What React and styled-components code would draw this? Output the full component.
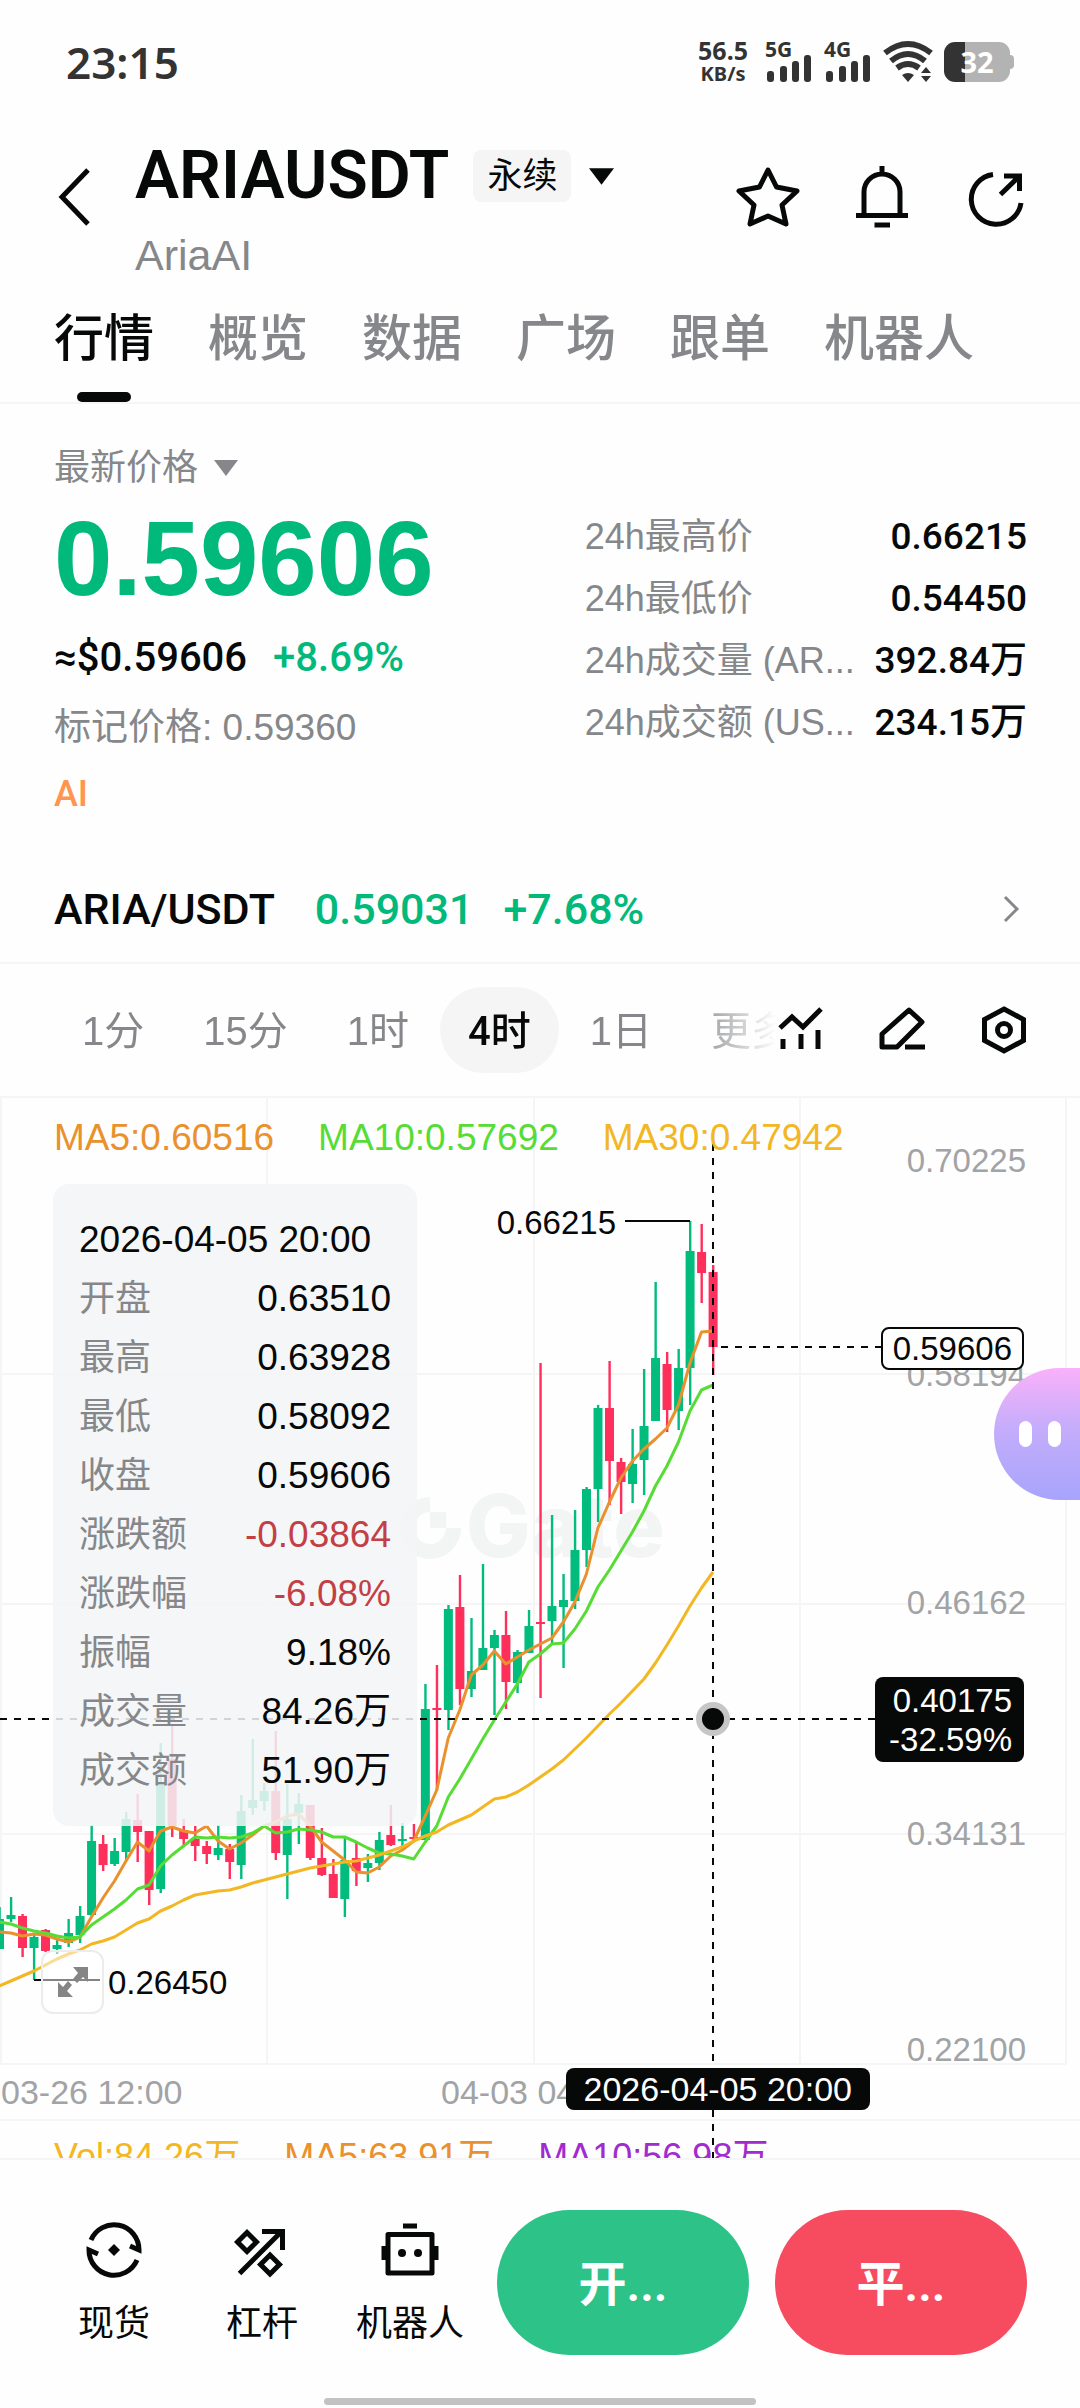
import React from "react";
import styled, { createGlobalStyle } from "styled-components";

const GlobalStyle = createGlobalStyle`
  * {
    box-sizing: border-box;
  }
  body {
    margin: 0;
    background: #fefefe;
    color: #070808;
    font-family: "Liberation Sans", "Noto Sans CJK SC", sans-serif;
  }
  button {
    margin: 0;
    padding: 0;
    border: 0;
    background: none;
    color: inherit;
    font: inherit;
    cursor: pointer;
  }
  a {
    color: inherit;
    text-decoration: none;
  }
  svg {
    display: block;
    flex: none;
  }
`;

const GREEN = "#02b97c";
const RED = "#ff2f5b";
const MEDIUM = `Roboto, "Noto Sans CJK SC", sans-serif`;

const Page = styled.div`
  min-height: 100vh;
  display: flex;
  flex-direction: column;
`;

/* status bar */
const StatusBar = styled.div`
  height: 118px;
  padding: 6px 66px 0;
  display: flex;
  align-items: center;
  justify-content: space-between;
  color: #333;
  font-family: "Noto Sans", sans-serif;
  font-weight: 600;

  .time {
    font-size: 44px;
  }
  .right {
    display: flex;
    align-items: center;
    gap: 11px;
  }
  .speed {
    margin-right: 6px;
    font-size: 25px;
    font-weight: 700;
    line-height: 23px;
    text-align: center;
  }
  .speed span {
    display: block;
    font-size: 20px;
  }
  svg {
    overflow: visible;
  }
`;
const Battery = styled.div`
  position: relative;
  width: 66px;
  height: 40px;
  margin-right: 4px;
  border-radius: 11px;
  background: linear-gradient(90deg, #333 32%, #b3b3b3 32%);
  color: #fff;
  font-size: 29px;
  font-weight: 700;
  line-height: 40px;
  text-align: center;

  &::after {
    content: "";
    position: absolute;
    left: 66px;
    top: 13px;
    width: 4px;
    height: 14px;
    border-radius: 0 4px 4px 0;
    background: #b3b3b3;
  }
`;

/* header */
const Header = styled.header`
  height: 158px;
  padding: 0 52px 0 56px;
  display: flex;
  align-items: center;
`;
const TitleBox = styled.div`
  flex: 1;
  padding: 32px 0 0 40px;

  .row {
    height: 56px;
    margin-bottom: 28px;
    display: flex;
    align-items: center;
  }
  h1 {
    margin: 0;
    font-family: ${MEDIUM};
    font-size: 66px;
    font-weight: 600;
    line-height: 56px;
  }
  .tag {
    height: 52px;
    margin: 0 18px 0 24px;
    padding: 0 14px;
    border-radius: 8px;
    background: #f5f5f5;
    font-size: 35px;
    line-height: 52px;
  }
  .sub {
    color: #85878a;
    font-size: 43px;
    line-height: 46px;
  }
`;
const Actions = styled.div`
  display: flex;
  gap: ${(props) => props.$gap}px;
`;

const Tabs = styled.nav`
  height: 128px;
  padding: 0 54px;
  display: flex;
  gap: 54px;
  border-bottom: 2px solid #f5f5f5;
`;
const Tab = styled.button`
  padding-top: 33px;
  display: flex;
  flex-direction: column;
  align-items: center;
  justify-content: space-between;
  color: ${(props) => (props.$active ? "#070808" : "#85878a")};
  font-size: 50px;
  font-weight: 500;
  line-height: 60px;

  &::after {
    content: "";
    width: 54px;
    height: 10px;
    border-radius: 5px;
    background: ${(props) => (props.$active ? "#070808" : "transparent")};
  }
`;

/* price block */
const Quote = styled.section`
  padding: 42px 53px 0 54px;
  display: grid;
  grid-template-columns: minmax(0, 6fr) minmax(0, 5fr);
`;
const PriceColumn = styled.div`
  display: flex;
  flex-direction: column;
  align-items: flex-start;
  gap: 24px;

  .label {
    display: flex;
    align-items: center;
    gap: 16px;
    color: #85878a;
    font-size: 36px;
    line-height: 44px;
  }
  .price {
    color: ${GREEN};
    font-size: 105px;
    font-weight: bold;
    line-height: 90px;
  }
  .usd {
    display: flex;
    gap: 26px;
    font-family: ${MEDIUM};
    font-size: 40px;
    font-weight: 500;
    line-height: 60px;
  }
  .up {
    color: ${GREEN};
  }
  .mark {
    color: #85878a;
    font-size: 37px;
    line-height: 32px;
  }
  .concept {
    color: #ff954f;
    font-family: ${MEDIUM};
    font-size: 36px;
    font-weight: 500;
    line-height: 52px;
  }
`;
const Stats = styled.dl`
  margin: 69px 0 0;
  display: flex;
  flex-direction: column;
  gap: 18px;
`;
const Stat = styled.div`
  display: flex;
  justify-content: space-between;
  font-size: 36px;
  line-height: 44px;
  white-space: nowrap;

  dt {
    color: #85878a;
  }
  dd {
    margin: 0;
    font-family: ${MEDIUM};
    font-size: 37px;
    font-weight: 500;
  }
`;

const SpotLink = styled.a`
  height: 108px;
  margin-top: 36px;
  padding: 0 60px 0 54px;
  display: flex;
  align-items: center;
  border-bottom: 2px solid #f5f5f5;
  font-family: ${MEDIUM};
  font-size: 43px;
  font-weight: 500;

  .price {
    margin: 0 30px 0 40px;
    color: ${GREEN};
  }
  .change {
    flex: 1;
    color: ${GREEN};
  }
`;

/* interval bar */
const IntervalBar = styled.div`
  height: 134px;
  padding: 0 52px 0 54px;
  display: flex;
  align-items: center;
  border-bottom: 2px solid #f5f5f5;
`;
const Intervals = styled.div`
  flex: 1;
  min-width: 0;
  overflow: hidden;
  display: flex;
  gap: 3px;
  mask-image: linear-gradient(90deg, #000 88%, transparent);
`;
const Interval = styled.button`
  flex: none;
  height: 86px;
  padding: 0 28px 4px;
  border-radius: 43px;
  background: ${(props) => (props.$active ? "#f5f5f5" : "none")};
  color: ${(props) => (props.$active ? "#070808" : "#85878a")};
  font-family: ${(props) => (props.$active ? MEDIUM : "inherit")};
  font-size: 40px;
  font-weight: ${(props) => (props.$active ? 500 : 400)};
`;

/* chart */
const ChartPanel = styled.section`
  position: relative;
  overflow: hidden;

  svg.plot {
    width: 100%;
    height: auto;
  }
`;
const Legend = styled.div`
  position: absolute;
  left: 54px;
  top: ${(props) => (props.$volume ? "auto" : "15px")};
  bottom: ${(props) => (props.$volume ? "0" : "auto")};
  height: ${(props) => (props.$volume ? 26 : 50)}px;
  overflow: hidden;
  display: flex;
  gap: 44px;
  font-size: ${(props) => (props.$volume ? 36 : 37)}px;
  line-height: 50px;
  white-space: nowrap;

  .ma5 {
    color: #e9912d;
  }
  .ma10 {
    color: #57dc35;
  }
  .ma30,
  .vol {
    color: #f2b722;
  }
  .volma10 {
    color: #a22bd0;
  }
`;
const Tooltip = styled.dl`
  position: absolute;
  left: 53px;
  top: 86px;
  width: 364px;
  margin: 0;
  padding: 26px;
  border-radius: 16px;
  background: rgba(242, 244, 246, 0.86);
  line-height: 59px;
  font-size: 37px;
  white-space: nowrap;

  div {
    height: 59px;
    display: flex;
    justify-content: space-between;
  }
  dt {
    color: #85878a;
    font-size: 36px;
  }
  dd {
    margin: 0;
  }
  .down {
    color: #c33f45;
  }
`;
const Tag = styled.div`
  position: absolute;
  right: 56px;
  border-radius: 8px;
  font-size: 33px;
`;
const LastPriceTag = styled(Tag)`
  top: 229px;
  padding: 0 10px;
  border: 2px solid #070808;
  background: #fefefe;
  line-height: 39px;
`;
const CursorTag = styled(Tag)`
  top: 579px;
  padding: 4px 12px 3px 14px;
  background: #070808;
  color: #fff;
  line-height: 39px;
  text-align: right;
`;
const DateTag = styled(Tag)`
  right: 210px;
  top: 970px;
  padding: 0 18px;
  background: #070808;
  color: #fff;
  font-size: 34px;
  line-height: 42px;
`;
const ExpandButton = styled.button`
  position: absolute;
  left: 41px;
  top: 852px;
  width: 63px;
  height: 64px;
  display: flex;
  align-items: center;
  justify-content: center;
  border: 2px solid #ececec;
  border-radius: 12px;
  background: rgba(255, 255, 255, 0.5);
`;
const Assistant = styled.button`
  position: absolute;
  right: 0;
  top: 270px;
  width: 86px;
  height: 132px;
  padding-left: 25px;
  display: flex;
  align-items: center;
  gap: 16px;
  border-radius: 66px 0 0 66px;
  background: linear-gradient(#fab1fa, #c5adfb 45%, #a7a4fc);

  span {
    width: 13px;
    height: 26px;
    border-radius: 7px;
    background: #fff;
  }
`;

/* bottom bar */
const BottomBar = styled.footer`
  flex: 1;
  position: relative;
  min-height: 250px;
  padding: 50px 53px 53px 40px;
  display: flex;
  align-items: flex-start;
  border-top: 2px solid #f5f5f5;

  &::after {
    content: "";
    position: absolute;
    left: 30%;
    right: 30%;
    bottom: 3px;
    height: 7px;
    border-radius: 4px;
    background: #c2c2c2;
  }
`;
const Tool = styled.button`
  width: 148px;
  height: 145px;
  display: flex;
  flex-direction: column;
  align-items: center;
  justify-content: center;
  gap: 22px;
  font-size: 36px;
  line-height: 44px;
`;
const TradeButtons = styled.div`
  flex: 1;
  margin-left: 13px;
  display: flex;
  gap: 26px;
`;
const TradeButton = styled.button`
  flex: 1;
  height: 145px;
  padding-bottom: 6px;
  border-radius: 73px;
  background: ${(props) => (props.$short ? "#f74c60" : "#2dc388")};
  color: #fff;
  font-family: ${MEDIUM};
  font-size: 48px;
  font-weight: 600;
`;

const Icon = ({ size, children }) => (
  <svg
    width={size}
    height={size}
    viewBox={`0 0 ${size} ${size}`}
    fill="none"
    stroke="#070808"
    strokeWidth="5"
    aria-hidden="true"
  >
    {children}
  </svg>
);

const Signal = ({ label }) => (
  <svg width="48" height="42" viewBox="0 0 48 42" fill="#333">
    <text x="0" y="16" fontSize="21" fontWeight="700">
      {label}
    </text>
    <rect x="2" y="30" width="7" height="11" rx="3" />
    <rect x="15" y="25" width="7" height="16" rx="3" />
    <rect x="27" y="20" width="7" height="21" rx="3" />
    <rect x="39" y="14" width="7" height="27" rx="3" />
  </svg>
);

const Triangle = ({ width, height, color }) => (
  <svg width={width} height={height} viewBox="0 0 24 16" fill={color}>
    <path d="M0 0H24L12 16Z" />
  </svg>
);

const tabs = ["行情", "概览", "数据", "广场", "跟单", "机器人"];
const intervals = ["1分", "15分", "1时", "4时", "1日", "更多"];
const stats = [
  ["24h最高价", "0.66215"],
  ["24h最低价", "0.54450"],
  ["24h成交量 (AR...", "392.84万"],
  ["24h成交额 (US...", "234.15万"],
];
const details = [
  ["开盘", "0.63510"],
  ["最高", "0.63928"],
  ["最低", "0.58092"],
  ["收盘", "0.59606"],
  ["涨跌额", "-0.03864", true],
  ["涨跌幅", "-6.08%", true],
  ["振幅", "9.18%"],
  ["成交量", "84.26万"],
  ["成交额", "51.90万"],
];

// body top, body bottom, high, low, 1 = rising
const candles = [
  [821, 851, 809, 851, 1], [817, 821, 799, 824, 1], [818, 850, 816, 859, 0],
  [839, 850, 837, 882, 1], [832, 853, 831, 854, 0], [847, 851, 842, 856, 1],
  [835, 845, 821, 849, 1], [818, 837, 808, 845, 1], [743, 817, 727, 818, 1],
  [746, 767, 737, 773, 0], [753, 766, 740, 768, 1], [721, 754, 714, 762, 1],
  [722, 734, 696, 764, 0], [733, 792, 733, 807, 0], [685, 791, 645, 795, 1],
  [661, 728, 628, 739, 0], [732, 741, 721, 749, 0], [741, 748, 728, 763, 0],
  [748, 756, 743, 766, 0], [750, 757, 727, 762, 1], [751, 764, 746, 781, 0],
  [713, 767, 697, 781, 1], [702, 710, 641, 717, 1], [693, 703, 685, 713, 1],
  [693, 755, 633, 762, 0], [721, 757, 686, 801, 1], [706, 715, 695, 746, 1],
  [707, 760, 707, 762, 0], [760, 777, 730, 778, 0], [776, 800, 761, 800, 0],
  [762, 801, 739, 819, 1], [760, 773, 743, 788, 0], [765, 770, 756, 784, 1],
  [742, 765, 734, 772, 1], [737, 747, 707, 748, 0], [741, 743, 725, 748, 1],
  [739, 741, 726, 744, 0], [611, 742, 586, 742, 1], [610, 612, 567, 693, 0],
  [511, 612, 507, 632, 1], [509, 591, 477, 607, 0], [573, 591, 520, 599, 1],
  [550, 572, 466, 572, 1], [537, 550, 532, 617, 1], [537, 584, 513, 611, 0],
  [554, 585, 552, 595, 1], [528, 555, 512, 555, 1], [524, 526, 265, 600, 0],
  [508, 523, 417, 545, 1], [502, 509, 476, 570, 1], [452, 503, 412, 511, 1],
  [391, 452, 389, 469, 1], [310, 391, 307, 424, 1], [310, 363, 263, 407, 0],
  [364, 384, 360, 416, 0], [366, 386, 331, 405, 1], [328, 362, 271, 397, 1],
  [260, 323, 184, 323, 1], [266, 312, 254, 334, 0], [270, 313, 251, 332, 1],
  [153, 270, 123, 307, 1], [154, 175, 126, 205, 0], [174, 249, 167, 277, 0],
];
const ma5 = [
  834, 835, 838, 836, 837, 841, 844, 839, 819, 800, 783, 763, 744, 753, 733,
  729, 733, 735, 728, 743, 751, 745, 737, 728, 724, 718, 716, 728, 744, 753,
  762, 774, 775, 769, 758, 752, 743, 718, 692, 640, 612, 577, 567, 553, 566,
  559, 552, 546, 540, 524, 504, 476, 430, 404, 380, 363, 351, 341, 330, 307,
  265, 234, 233,
];
const ma10 = [
  824, 826, 830, 833, 835, 838, 840, 839, 827, 819, 811, 802, 791, 787, 768,
  757, 748, 739, 740, 739, 740, 739, 735, 728, 735, 734, 731, 732, 734, 739,
  739, 744, 750, 755, 756, 758, 761, 744, 728, 699, 681, 661, 641, 622, 604,
  586, 564, 556, 546, 545, 531, 513, 489, 472, 453, 434, 413, 388, 368, 344,
  313, 292, 287,
];
const ma30 = [
  888, 883, 878, 873, 867, 861, 856, 852, 846, 843, 839, 832, 825, 821, 813,
  808, 802, 797, 795, 793, 792, 789, 785, 782, 779, 776, 773, 770, 768, 766,
  764, 763, 760, 757, 753, 749, 743, 738, 734, 727, 722, 717, 709, 701, 699,
  694, 687, 679, 671, 662, 651, 640, 628, 616, 605, 593, 581, 565, 547, 528,
  508, 490, 474,
];

const candleX = (i) => 713 - (candles.length - 1 - i) * 11.51;
const toPoints = (values) => values.map((y, i) => `${candleX(i)},${y}`).join(" ");

const axisLabels = [
  [62, "0.70225"],
  [276, "0.58194"],
  [504, "0.46162"],
  [735, "0.34131"],
  [951, "0.22100"],
];

function Plot() {
  return (
    <svg className="plot" viewBox="0 0 1080 1060" fontSize="33">
      <g stroke="#f5f5f5" strokeWidth="2">
        {[1, 267, 534, 800, 1066].map((x) => (
          <line key={x} x1={x} x2={x} y1="0" y2="966" />
        ))}
        {[276, 506, 736, 966].map((y) => (
          <line key={y} x1="0" x2="1066" y1={y} y2={y} />
        ))}
        <line x1="0" x2="1080" y1="1022" y2="1022" />
      </g>

      {/* watermark */}
      <g fill="#f3f5f5">
        <path d="M430 399A31 31 0 1 0 461 430H446A16 16 0 1 1 430 414Z" />
        <rect x="430" y="414" width="16" height="16" />
        <text x="466" y="459" fontFamily="Inter" fontSize="86" fontWeight="800">
          Gate
        </text>
      </g>

      <g fill="#a1a3a5" dominantBaseline="central">
        {axisLabels.map(([y, label]) => (
          <text key={label} x="1026" y={y} textAnchor="end">
            {label}
          </text>
        ))}
        <text x="1" y="994" fontSize="34">
          03-26 12:00
        </text>
        <text x="441" y="994" fontSize="34">
          04-03 04:00
        </text>
      </g>

      {candles.map(([top, bottom, high, low, up], i) => (
        <g key={i} fill={up ? "#02bc7d" : RED}>
          <rect x={candleX(i) - 1} y={high} width="2.4" height={low - high} />
          <rect x={candleX(i) - 4.4} y={top} width="9" height={bottom - top} />
        </g>
      ))}

      <g fill="none" strokeWidth="3" strokeLinejoin="round">
        <polyline points={toPoints(ma5)} stroke="#e9912d" />
        <polyline points={toPoints(ma10)} stroke="#57dc35" />
        <polyline points={toPoints(ma30)} stroke="#f2b722" />
      </g>

      <g stroke="#070808" strokeWidth="2">
        <line x1="625" x2="690" y1="123" y2="123" />
        <line x1="34" x2="100" y1="882" y2="882" />
        <g strokeDasharray="7 7">
          <line x1="721" x2="882" y1="249" y2="249" />
          <line x1="0" x2="875" y1="621" y2="621" />
          <line x1="713" x2="713" y1="46" y2="1060" />
        </g>
      </g>
      <g fill="#070808" dominantBaseline="central">
        <text x="616" y="124" textAnchor="end">
          0.66215
        </text>
        <text x="108" y="884">
          0.26450
        </text>
      </g>
      <circle cx="713" cy="621" r="17" fill="#c6c6c6" />
      <circle cx="713" cy="621" r="11" fill="#070808" />
    </svg>
  );
}

function App() {
  return (
    <Page>
      <GlobalStyle />
      <StatusBar>
        <span className="time">23:15</span>
        <div className="right">
          <div className="speed">
            56.5
            <span>KB/s</span>
          </div>
          <Signal label="5G" />
          <Signal label="4G" />
          <svg width="50" height="42" viewBox="0 0 50 42" fill="#333">
            <g fill="none" stroke="#333" strokeWidth="6">
              <path d="M2 12Q25 -6 48 12" />
              <path d="M8 20Q25 6 42 20" />
              <path d="M14 27Q25 19 36 27" />
            </g>
            <path d="M19 34Q25 30 31 34L25 41Z" />
            <path d="M38 32L43 26L48 32ZM38 35H48L43 41Z" />
          </svg>
          <Battery>32</Battery>
        </div>
      </StatusBar>

      <Header>
        <button aria-label="返回">
          <svg width="39" height="64" viewBox="0 0 39 64" fill="none" stroke="#070808" strokeWidth="5">
            <path d="M32 5L6 32L32 59" />
          </svg>
        </button>
        <TitleBox>
          <div className="row">
            <h1>ARIAUSDT</h1>
            <span className="tag">永续</span>
            <Triangle width="25" height="17" color="#070808" />
          </div>
          <div className="sub">AriaAI</div>
        </TitleBox>
        <Actions $gap={50}>
          <button aria-label="收藏">
            <Icon size={64}>
              <path
                d="M32 5L40.5 22L61 26L46 40L50 59L32 51L14 59L18 40L3 26L23.5 22Z"
                strokeLinejoin="round"
              />
            </Icon>
          </button>
          <button aria-label="提醒">
            <Icon size={64}>
              <path d="M14 50V27A18 18 0 0 1 50 27V50M6 50.5H58M24.5 60H40M32 1V9" />
            </Icon>
          </button>
          <button aria-label="分享">
            <Icon size={64}>
              <path d="M29 9.5A25 25 0 1 0 57 38M36.5 29.5L56 10.5M40 11H55.5V26" />
            </Icon>
          </button>
        </Actions>
      </Header>

      <Tabs>
        {tabs.map((tab, i) => (
          <Tab key={tab} $active={i === 0}>
            {tab}
          </Tab>
        ))}
      </Tabs>

      <Quote>
        <PriceColumn>
          <button className="label">
            最新价格
            <Triangle width="24" height="16" color="#85878a" />
          </button>
          <div className="price">0.59606</div>
          <div className="usd">
            <span>≈$0.59606</span>
            <span className="up">+8.69%</span>
          </div>
          <div className="mark">标记价格: 0.59360</div>
          <a className="concept" href="#ai">
            AI
          </a>
        </PriceColumn>
        <Stats>
          {stats.map(([label, value]) => (
            <Stat key={label}>
              <dt>{label}</dt>
              <dd>{value}</dd>
            </Stat>
          ))}
        </Stats>
      </Quote>

      <SpotLink href="#spot">
        <span>ARIA/USDT</span>
        <span className="price">0.59031</span>
        <span className="change">+7.68%</span>
        <svg width="18" height="28" viewBox="0 0 18 28" fill="none" stroke="#85878a" strokeWidth="3">
          <path d="M3 2L15 14L3 26" />
        </svg>
      </SpotLink>

      <IntervalBar>
        <Intervals>
          {intervals.map((item) => (
            <Interval key={item} $active={item === "4时"}>
              {item}
            </Interval>
          ))}
        </Intervals>
        <Actions $gap={54}>
          <button aria-label="指标">
            <Icon size={48}>
              <path d="M4 22L16 11L27 21L45 3M7 33V43M25 28V43M42 24V43" />
            </Icon>
          </button>
          <button aria-label="画线">
            <Icon size={48}>
              <path d="M31 4L44 16L19 41H4V28Z" strokeLinejoin="round" />
              <path d="M27 41H47" />
            </Icon>
          </button>
          <button aria-label="设置">
            <Icon size={48}>
              <path d="M24 3L43.5 13.5V34.5L24 45L4.5 34.5V13.5Z" />
              <circle cx="24" cy="24" r="6.5" />
            </Icon>
          </button>
        </Actions>
      </IntervalBar>

      <ChartPanel>
        <Plot />
        <Legend>
          <span className="ma5">MA5:0.60516</span>
          <span className="ma10">MA10:0.57692</span>
          <span className="ma30">MA30:0.47942</span>
        </Legend>
        <Tooltip>
          <div>2026-04-05 20:00</div>
          {details.map(([label, value, down]) => (
            <div key={label}>
              <dt>{label}</dt>
              <dd className={down ? "down" : undefined}>{value}</dd>
            </div>
          ))}
        </Tooltip>
        <LastPriceTag>0.59606</LastPriceTag>
        <CursorTag>
          0.40175
          <br />
          -32.59%
        </CursorTag>
        <DateTag>2026-04-05 20:00</DateTag>
        <ExpandButton aria-label="全屏">
          <svg width="30" height="30" viewBox="0 0 30 30" fill="#858585">
            <path d="M15 0H30V15L25 10L19 16L15 12L20 6ZM0 15L5 20L10 14L14 18L9 24L15 30H0Z" />
          </svg>
        </ExpandButton>
        <Assistant aria-label="助手">
          <span />
          <span />
        </Assistant>
        <Legend $volume>
          <span className="vol">Vol:84.26万</span>
          <span className="ma5">MA5:63.91万</span>
          <span className="volma10">MA10:56.98万</span>
        </Legend>
      </ChartPanel>

      <BottomBar>
        <Tool>
          <Icon size={60}>
            <path d="M7 20A25 25 0 0 1 55 30L46 26M53 40A25 25 0 0 1 5 30L14 34" />
            <path d="M30 24L36 30L30 36L24 30Z" fill="#070808" stroke="none" />
          </Icon>
          现货
        </Tool>
        <Tool>
          <Icon size={60}>
            <path d="M15 12.5L24.5 22L15 31.5L5.5 22ZM38 35L47.5 44.5L38 54L28.5 44.5Z" />
            <path d="M7.5 53.5L50 11M30 11.5H50.5V30" />
          </Icon>
          杠杆
        </Tool>
        <Tool>
          <Icon size={60}>
            <path d="M8 14.5H52V53H8ZM23 6H37M4 26V40M56 26V40" strokeLinejoin="round" />
            <g fill="#070808" stroke="none">
              <circle cx="22" cy="33" r="4" />
              <circle cx="38" cy="33" r="4" />
            </g>
          </Icon>
          机器人
        </Tool>
        <TradeButtons>
          <TradeButton>开...</TradeButton>
          <TradeButton $short>平...</TradeButton>
        </TradeButtons>
      </BottomBar>
    </Page>
  );
}

export default App;
